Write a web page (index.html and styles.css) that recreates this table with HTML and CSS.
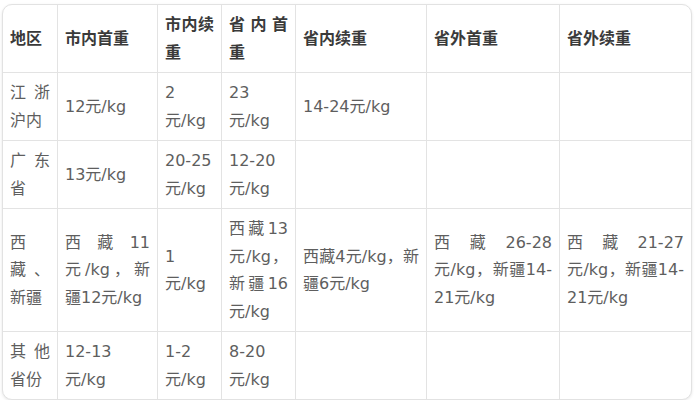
FILE: index.html
```html
<!DOCTYPE html>
<html lang="zh-CN">
<head>
<meta charset="utf-8">
<title>运费表</title>
<link rel="stylesheet" href="styles.css">
</head>
<body>
<div class="card">
  <table class="rates">
    <colgroup>
      <col class="c1"><col class="c2"><col class="c3"><col class="c4"><col class="c5"><col class="c6"><col class="c7">
    </colgroup>
    <thead>
      <tr>
        <th>地区</th>
        <th>市内首重</th>
        <th>市内续重</th>
        <th>省内首重</th>
        <th>省内续重</th>
        <th>省外首重</th>
        <th>省外续重</th>
      </tr>
    </thead>
    <tbody>
      <tr>
        <td>江浙沪内</td>
        <td>12元/kg</td>
        <td>2元/kg</td>
        <td>23元/kg</td>
        <td>14-24元/kg</td>
        <td></td>
        <td></td>
      </tr>
      <tr>
        <td>广东省</td>
        <td>13元/kg</td>
        <td>20-25元/kg</td>
        <td>12-20元/kg</td>
        <td></td>
        <td></td>
        <td></td>
      </tr>
      <tr>
        <td>西藏、新疆</td>
        <td>西藏11元/kg，新疆12元/kg</td>
        <td>1元/kg</td>
        <td>西藏13元/kg，新疆16元/kg</td>
        <td>西藏4元/kg，新疆6元/kg</td>
        <td>西藏26-28元/kg，新疆14-<wbr>21元/kg</td>
        <td>西藏21-27元/kg，新疆14-<wbr>21元/kg</td>
      </tr>
      <tr>
        <td>其他省份</td>
        <td>12-13元/kg</td>
        <td>1-2元/kg</td>
        <td>8-20元/kg</td>
        <td></td>
        <td></td>
        <td></td>
      </tr>
    </tbody>
  </table>
</div>
</body>
</html>
```
FILE: styles.css
```css
html, body {
  margin: 0;
  padding: 0;
  background: #ffffff;
}

body {
  font-family: "DejaVu Sans", "Noto Sans CJK SC", sans-serif;
  font-size: 16px;
}

.card {
  width: 688px;
  margin: 4px 0 0 2px;
  border: 1px solid #e2e2e2;
  border-radius: 10px;
  box-shadow: 0 1px 3px rgba(0, 0, 0, 0.10);
  overflow: hidden;
  background: #ffffff;
}

.rates {
  width: 688px;
  table-layout: fixed;
  border-collapse: separate;
  border-spacing: 0;
}

.c1 { width: 55px; }
.c2 { width: 100px; }
.c3 { width: 64px; }
.c4 { width: 74px; }
.c5 { width: 131px; }
.c6 { width: 133px; }
.c7 { width: 131px; }

.rates th,
.rates td {
  padding: 6px 7px;
  line-height: 27.5px;
  text-align: justify;
  vertical-align: middle;
  border-right: 1px solid #e3e3e3;
  border-bottom: 1px solid #e3e3e3;
  color: #5e5e5e;
  word-break: normal;
}

.rates th {
  color: #3a3a3a;
  font-weight: bold;
}

.rates tr > :last-child {
  border-right: none;
}

.rates tbody tr:last-child > td {
  border-bottom: none;
}
```
